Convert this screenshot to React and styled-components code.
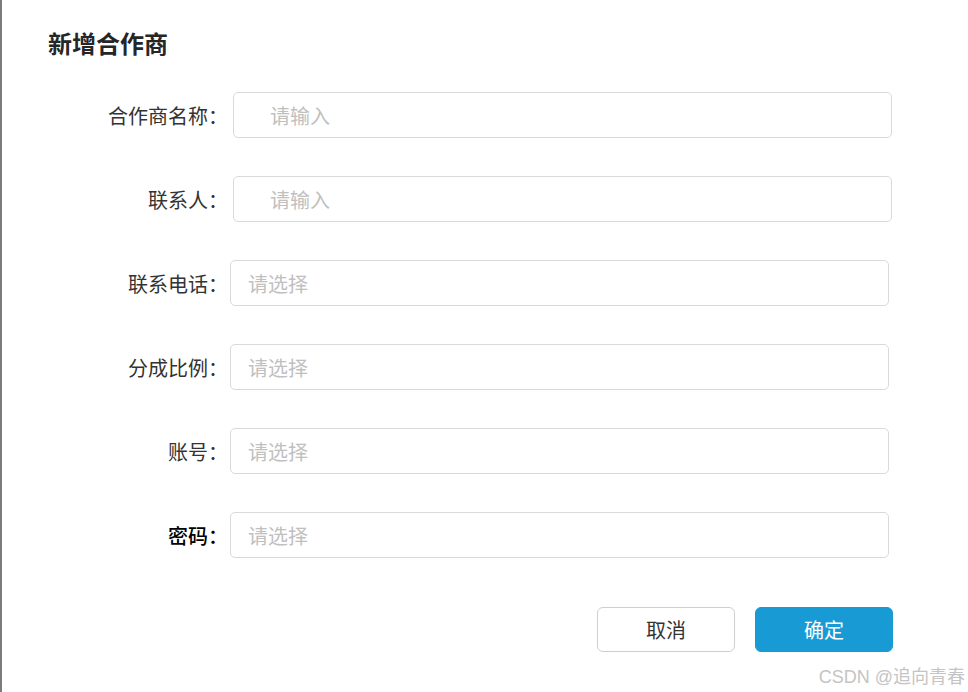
import React from "react";
import styled, { createGlobalStyle } from "styled-components";

const GlobalStyle = createGlobalStyle`
  html, body {
    margin: 0;
    padding: 0;
    background: #fff;
    font-family: "Noto Sans CJK SC", "Noto Sans", sans-serif;
  }
`;

const Page = styled.div`
  position: relative;
  box-sizing: border-box;
  width: 968px;
  height: 692px;
  border-left: 2px solid #7c7c7c;
  padding: 25px 75px 0 46px;
  background: #fff;
`;

const Title = styled.h2`
  margin: 0;
  font-size: 24px;
  font-weight: 700;
  line-height: 36px;
  color: #262626;
`;

const Form = styled.div`
  display: flex;
  flex-direction: column;
  gap: 38px;
  margin-top: 31px;
`;

const Row = styled.div`
  display: flex;
  align-items: center;
  height: 46px;
`;

const Label = styled.label`
  width: 180px;
  flex: none;
  text-align: right;
  font-size: 20px;
  color: ${p => (p.dark ? "#000" : "#333")};
  font-weight: ${p => (p.dark ? 500 : 400)};
`;

const Input = styled.input`
  box-sizing: border-box;
  width: 659px;
  height: 46px;
  margin-left: ${p => (p.shifted ? "5px" : "2px")};
  padding: 0 0 0 ${p => (p.shifted ? "36px" : "17px")};
  border: 1px solid #dadada;
  border-radius: 5px;
  font-family: inherit;
  font-size: 20px;
  color: #333;
  outline: none;
  &::placeholder {
    color: #c0c0c0;
  }
`;

const Actions = styled.div`
  display: flex;
  justify-content: flex-end;
  gap: 20px;
  margin-top: 49px;
`;

const Button = styled.button`
  box-sizing: border-box;
  width: 138px;
  height: 45px;
  border-radius: 6px;
  font-family: inherit;
  font-size: 20px;
  cursor: pointer;
  border: 1px solid ${p => (p.primary ? "#189bd5" : "#cfcfcf")};
  background: ${p => (p.primary ? "#189bd5" : "#fff")};
  color: ${p => (p.primary ? "#fff" : "#333")};
`;

const Watermark = styled.div`
  position: absolute;
  right: 3px;
  bottom: 4px;
  font-size: 18px;
  color: #c4c4c4;
  font-family: "Liberation Sans", "Noto Sans CJK SC", sans-serif;
`;

const fields = [
  { label: "合作商名称：", placeholder: "请输入", shifted: true },
  { label: "联系人：", placeholder: "请输入", shifted: true },
  { label: "联系电话：", placeholder: "请选择" },
  { label: "分成比例：", placeholder: "请选择" },
  { label: "账号：", placeholder: "请选择" },
  { label: "密码：", placeholder: "请选择", dark: true }
];

const App = () => (
  <>
    <GlobalStyle />
    <Page>
      <Title>新增合作商</Title>
      <Form>
        {fields.map(f => (
          <Row key={f.label}>
            <Label dark={f.dark}>{f.label}</Label>
            <Input shifted={f.shifted} placeholder={f.placeholder} />
          </Row>
        ))}
      </Form>
      <Actions>
        <Button>取消</Button>
        <Button primary>确定</Button>
      </Actions>
      <Watermark>CSDN @追向青春</Watermark>
    </Page>
  </>
);

export default App;
